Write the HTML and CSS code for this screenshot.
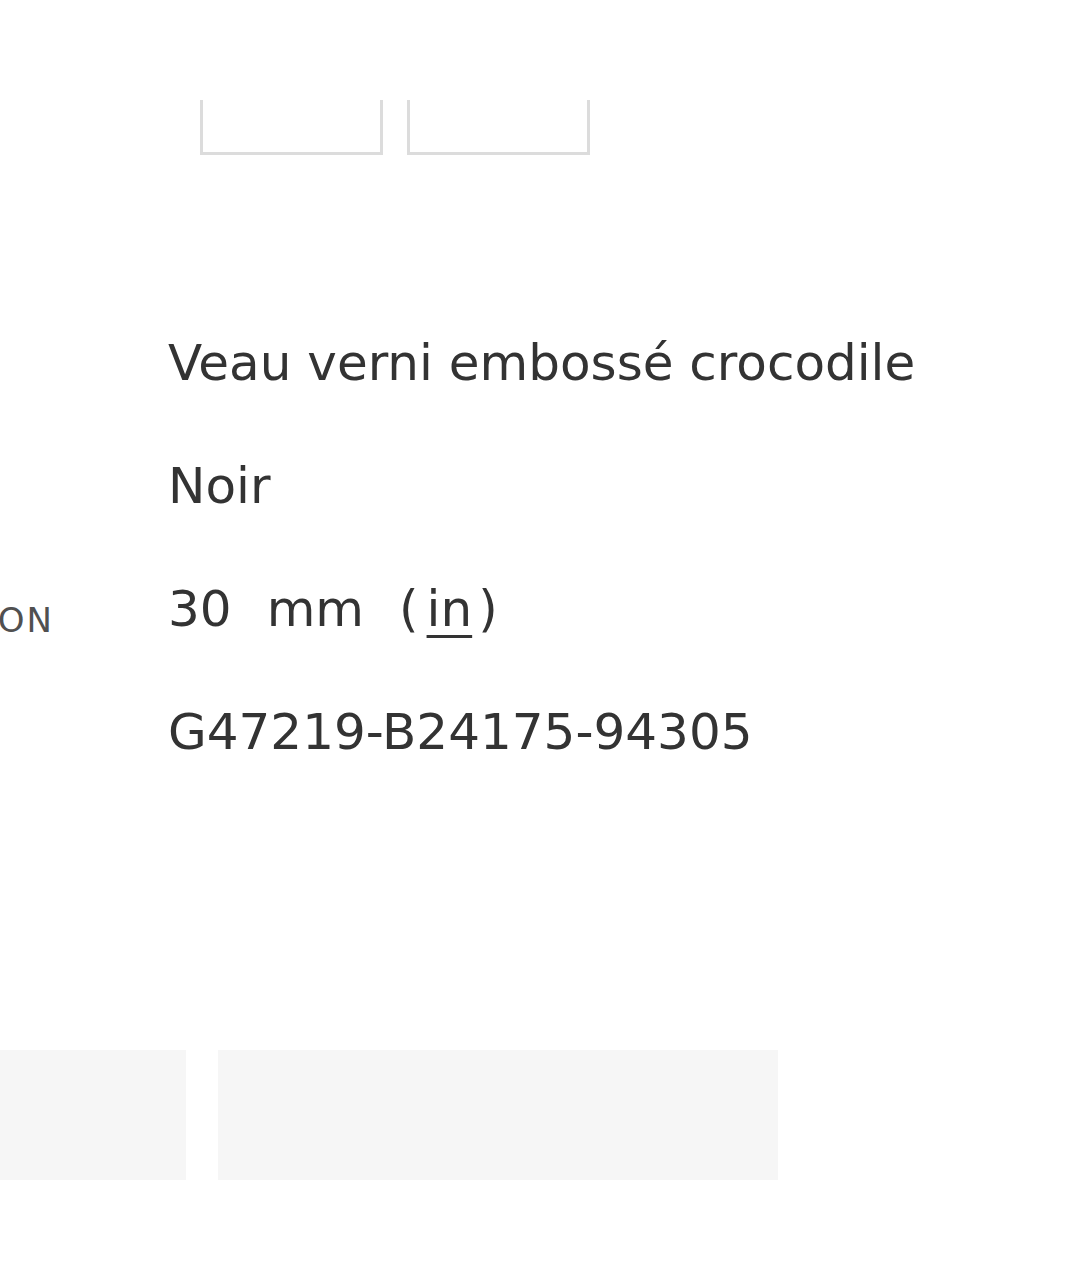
FILE: index.html
```html
<!DOCTYPE html>
<html lang="fr">
<head>
<meta charset="utf-8">
<link rel="stylesheet" href="styles.css">
</head>
<body>
<div class="page">
  <div class="swatches">
    <div class="swatch"></div>
    <div class="swatch"></div>
  </div>
  <dl class="specs">
    <div class="row"><dt class="label">MATIÈRE</dt><dd class="value">Veau verni embossé crocodile</dd></div>
    <div class="row"><dt class="label">COULEUR</dt><dd class="value">Noir</dd></div>
    <div class="row"><dt class="label shown">DIMENSION</dt><dd class="value"><span class="num">30</span><span class="mm">mm</span><span class="paren">(</span><span class="unit">in</span><span class="paren">)</span></dd></div>
    <div class="row"><dt class="label">RÉFÉRENCE</dt><dd class="value">G47219-B24175-94305</dd></div>
  </dl>
  <div class="tiles">
    <div class="tile tile-a"></div>
    <div class="tile tile-b"></div>
  </div>
</div>
</body>
</html>
```
FILE: styles.css
```css
html, body {
  margin: 0;
  padding: 0;
  background: #ffffff;
}
.page {
  width: 1080px;
  height: 1280px;
  overflow: hidden;
  font-family: "DejaVu Sans", "Liberation Sans", sans-serif;
  color: #333333;
}
.swatches {
  display: flex;
  gap: 24px;
  padding-top: 100px;
  margin-left: 200px;
}
.swatch {
  width: 177px;
  height: 52px;
  border: 3px solid #dcdcdc;
  border-top: none;
}
.specs {
  margin: 146px 0 0 0;
  padding: 0;
}
.row {
  display: flex;
  height: 123px;
  align-items: center;
}
.label {
  width: 54px;
  margin: 0 114px 0 0;
  display: flex;
  justify-content: flex-end;
  white-space: nowrap;
  font-size: 34px;
  letter-spacing: 2px;
  color: #505050;
  visibility: hidden;
}
.label.shown {
  visibility: visible;
  padding-top: 22px;
}
.value {
  margin: 0;
  font-size: 50px;
  white-space: nowrap;
}
.num { margin-right: 35px; }
.mm { margin-right: 35px; }
.paren { display: inline-block; }
.unit {
  display: inline-block;
  margin: 0 6px 0 8px;
  text-decoration: underline;
  text-underline-offset: 9px;
  text-decoration-thickness: 3px;
}
.tiles {
  display: flex;
  gap: 32px;
  margin-top: 257px;
}
.tile {
  height: 130px;
  background: #f6f6f6;
}
.tile-a { width: 186px; }
.tile-b { width: 560px; }
```
